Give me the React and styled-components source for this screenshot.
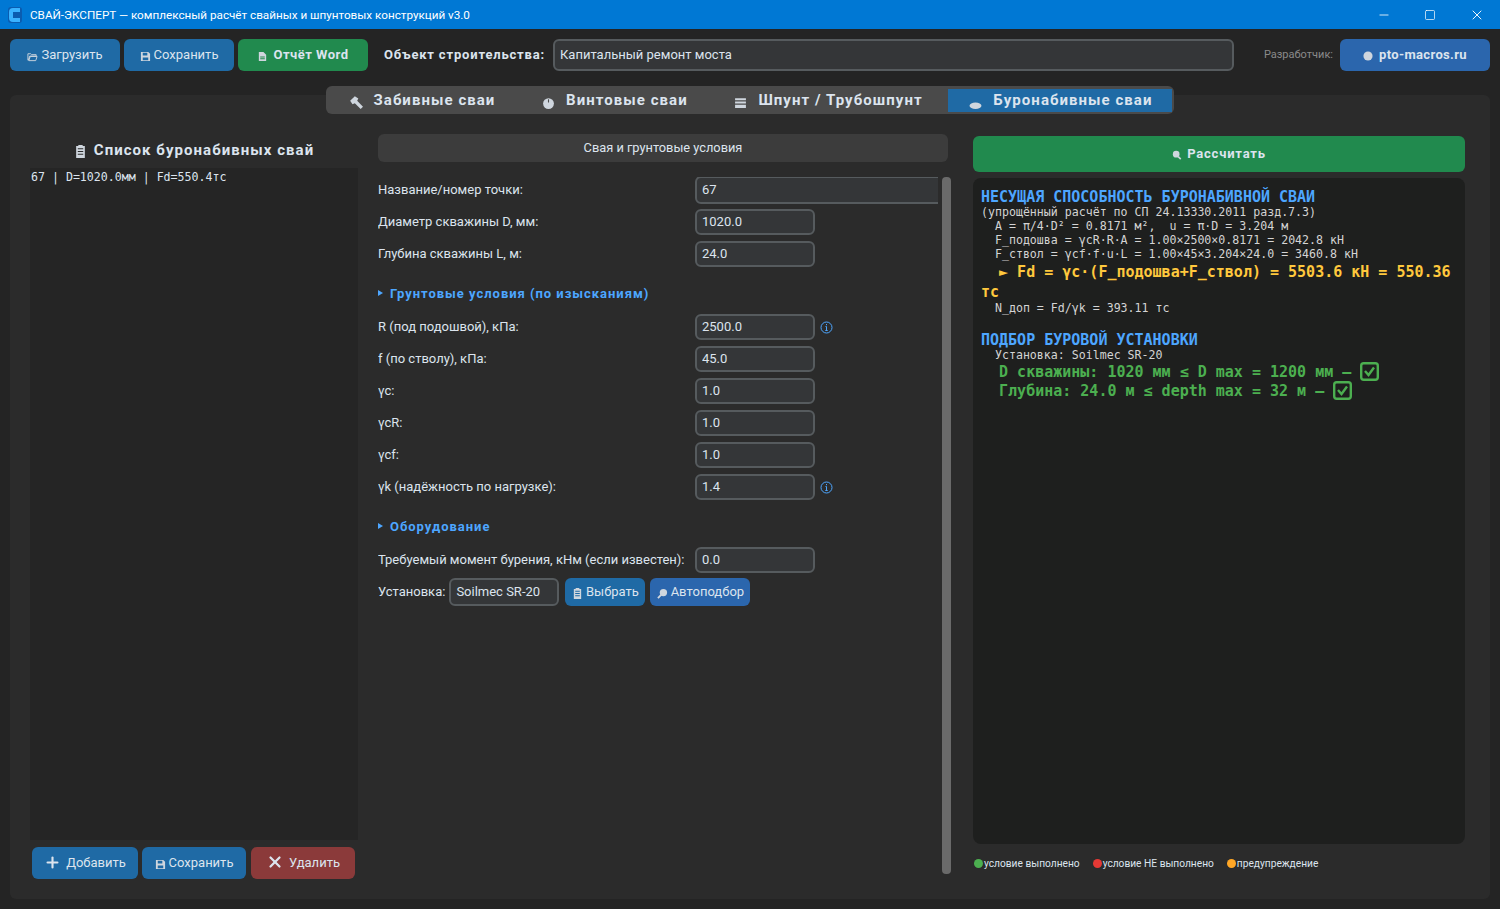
import React from "react";
import styled, { createGlobalStyle } from "styled-components";
import { Minus, Square, X, Plus } from "lucide-react";

const GlobalStyle = createGlobalStyle`
  html, body { margin: 0; padding: 0; background: #242424; }
  body { font-family: Roboto, "Liberation Sans", sans-serif; color: #dce4ee; }
  * { box-sizing: border-box; }
`;

const Window = styled.div`
  width: 1500px;
  height: 909px;
  overflow: hidden;
  display: flex;
  flex-direction: column;
  background: #242424;
`;

const TitleBar = styled.div`
  height: 29px;
  background: #0078d4;
  display: flex;
  align-items: center;
  padding-left: 8px;
  color: #fff;
  font-size: 11.7px;
`;

const TitleText = styled.span`
  margin-left: 8px;
  flex: 1;
`;

const WinControls = styled.div`
  display: flex;
  align-items: center;
  gap: 33px;
  padding-right: 15px;
  color: #fff;
`;

const Toolbar = styled.div`
  display: flex;
  align-items: center;
  height: 32px;
  margin: 10px 10px 0;
`;

const Button = styled.div`
  display: flex;
  align-items: center;
  justify-content: center;
  gap: ${(p) => p.$gap || 3}px;
  flex: none;
  width: ${(p) => p.$w}px;
  height: ${(p) => p.$h || 32}px;
  margin-left: ${(p) => p.$ml || 0}px;
  padding-bottom: 2px;
  border-radius: 6px;
  background: ${(p) => p.$bg || "#1f6aa5"};
  color: #dce4ee;
  font-size: 13px;
  font-weight: ${(p) => (p.$bold ? 700 : 400)};
  letter-spacing: ${(p) => (p.$bold ? `${p.$ls ?? 0.5}px` : "0")};
`;

const ObjectLabel = styled.span`
  margin-left: 16px;
  padding-bottom: 2px;
  font-size: 13px;
  font-weight: 700;
  letter-spacing: 0.82px;
  white-space: nowrap;
`;

const Input = styled.input`
  display: block;
  flex: ${(p) => (p.$grow ? 1 : "none")};
  width: ${(p) => (p.$w ? `${p.$w}px` : "120px")};
  height: ${(p) => p.$h || 26}px;
  margin-left: ${(p) => p.$ml || 0}px;
  padding: 0 5px 2px;
  border: 2px solid #565b5e;
  border-radius: 6px;
  background: #343638;
  color: #dce4ee;
  font: 13px Roboto, "Liberation Sans", sans-serif;
  outline: none;
`;

const DevLabel = styled.span`
  margin: 0 7px 0 30px;
  padding-bottom: 2px;
  color: #8a8a8a;
  font-size: 11px;
`;

const Stage = styled.div`
  flex: 1;
  display: flex;
  flex-direction: column;
  align-items: center;
  margin: 15px 10px 10px;
`;

const TabBar = styled.div`
  position: relative;
  z-index: 1;
  display: flex;
  align-items: center;
  height: 28px;
  margin-bottom: -19px;
  padding: 3px 2px;
  border-radius: 6px;
  background: #4a4a4a;
`;

const Tab = styled.div`
  display: flex;
  align-items: center;
  gap: 11px;
  height: 23px;
  padding: ${(p) => (p.$active ? "0 20px 0 21px" : "0 25.7px 0 21px")};
  background: ${(p) => (p.$active ? "#1f6aa5" : "transparent")};
  color: #dce4ee;
  font-size: 15px;
  font-weight: 700;
  letter-spacing: 1.05px;
  white-space: nowrap;
`;

const Panel = styled.div`
  flex: 1;
  width: 100%;
  display: grid;
  grid-template-columns: 328px 570px 497px;
  column-gap: 20px;
  padding: 39px 0 20px 20px;
  border-radius: 6px;
  background: #2b2b2b;
`;

const LeftCol = styled.div`
  display: flex;
  flex-direction: column;
`;

const ListTitle = styled.div`
  display: flex;
  align-items: center;
  justify-content: center;
  gap: 7px;
  height: 34px;
  padding-bottom: 3px;
  font-size: 15px;
  font-weight: 700;
  letter-spacing: 1.05px;
`;

const PileList = styled.div`
  height: 672px;
  padding: 2px 1px;
  background: #252525;
  font-family: "DejaVu Sans Mono", monospace;
  font-size: 11.6px;
  line-height: 14px;
  white-space: pre;
`;

const ListActions = styled.div`
  display: flex;
  margin: 7px 0 0 2px;
`;

const CenterCol = styled.div`
  position: relative;
`;

const SectionHead = styled.div`
  display: flex;
  align-items: center;
  justify-content: center;
  height: 28px;
  padding-bottom: 2px;
  border-radius: 6px;
  background: #3c3c3c;
  font-size: 12.8px;
`;

const Form = styled.div`
  width: 560px;
  height: 697px;
  margin-top: 15px;
  overflow: hidden;
  display: flex;
  flex-direction: column;
`;

const Row = styled.div`
  display: flex;
  align-items: center;
  flex: none;
  height: 26px;
  margin-bottom: 6px;
`;

const Label = styled.label`
  flex: none;
  width: 317px;
  padding-bottom: 1px;
  font-size: 13px;
  white-space: nowrap;
`;

const InlineLabel = styled.span`
  padding-bottom: 1px;
  font-size: 13px;
  margin-right: 4px;
`;

const Group = styled.div`
  flex: none;
  height: 20px;
  margin: ${(p) => p.$top}px 0 ${(p) => p.$bottom}px;
  display: flex;
  align-items: center;
  gap: 6px;
  color: #4da6ff;
  font-size: 13px;
  font-weight: 700;
  letter-spacing: 0.97px;
`;

const GroupMark = styled.span`
  width: 0;
  height: 0;
  margin-right: 1px;
  border-left: 5px solid #4da6ff;
  border-top: 3px solid transparent;
  border-bottom: 3px solid transparent;
`;

const Info = styled.svg`
  flex: none;
  margin-left: 5px;
`;

const ScrollThumb = styled.div`
  position: absolute;
  top: 43px;
  right: -3px;
  width: 9px;
  height: 697px;
  border-radius: 4px;
  background: #6a6a6a;
`;

const RightCol = styled.div`
  display: flex;
  flex-direction: column;
  padding-top: 2px;
  margin-left: 5px;
`;

const CalcButton = styled(Button)`
  width: 492px;
  height: 36px;
  letter-spacing: 0.8px;
`;

const Result = styled.div`
  height: 666px;
  margin-top: 6px;
  padding: 11px 8px;
  border-radius: 8px;
  background: #1e1f1e;
  font-family: "DejaVu Sans Mono", monospace;
  white-space: pre-wrap;
`;

const Plain = styled.div`
  color: #d4d4d4;
  font-size: 11.6px;
  line-height: 14px;
`;

const Heading = styled.div`
  color: #4da6ff;
  font-size: 15px;
  font-weight: 700;
  line-height: 16px;
  margin-top: ${(p) => p.$top || 0}px;
`;

const Highlight = styled.div`
  color: #ffc83d;
  font-size: 15px;
  font-weight: 700;
  line-height: 20px;
  margin: 1px 0 -1px;
`;

const Ok = styled.div`
  display: flex;
  align-items: center;
  height: 19px;
  color: #4caf50;
  font-size: 15px;
  font-weight: 700;
`;

const Check = styled.svg`
  flex: none;
  margin-left: 9px;
`;

const Legend = styled.div`
  display: flex;
  align-items: center;
  gap: 12px;
  margin-top: 14px;
  font-size: 10.2px;
`;

const LegendItem = styled.span`
  display: flex;
  align-items: center;
`;

const Dot = styled.span`
  width: 9px;
  height: 9px;
  margin: 0 1px 0 1px;
  border-radius: 50%;
  background: ${(p) => p.$c};
`;

const Glyph = ({ size = 11, children, color = "#cfd6de" }) => (
  <svg width={size} height={size} viewBox="0 0 12 12" fill={color} style={{ flex: "none", marginTop: 4 }}>
    {children}
  </svg>
);

const Folder = () => (
  <Glyph>
    <path d="M1 3h3l1 1h5v1.500H3L1.500 10H1zM3.500 6H11l-1.500 4.500H2z" fill="none" stroke="#cfd6de" />
  </Glyph>
);
const Floppy = () => (
  <Glyph>
    <path d="M1 1h8l2 2v8H1zM3 2v3h5V2zM3 7v3h6V7z" fillRule="evenodd" />
  </Glyph>
);
const Doc = () => (
  <Glyph>
    <path d="M2 1h5l3 3v7H2zM3.500 6v1h5V6zM3.500 8v1h5V8z" fillRule="evenodd" />
  </Glyph>
);
const Clipboard = ({ size = 11 }) => (
  <Glyph size={size}>
    <path d="M4 0h4v1h2v11H2V1h2zM3.500 3v1h5V3zM3.500 5.500v1h5v-1zM3.500 8v1h5V8z" fillRule="evenodd" />
  </Glyph>
);
const Hammer = () => (
  <Glyph size={14}>
    <path d="M1 5l4-4 3 2-1 2 5 5-2 2-5-5-2 1z" />
  </Glyph>
);
const Ball = () => (
  <Glyph size={13}>
    <circle cx="6" cy="7" r="5" />
    <path d="M6 3v3" stroke="#4a4a4a" />
  </Glyph>
);
const Lines = () => (
  <Glyph size={13}>
    <path d="M1 2h10v2H1zM1 5h10v2H1zM1 8h10v3H1z" />
  </Glyph>
);
const Hole = () => (
  <Glyph size={13}>
    <ellipse cx="6" cy="9" rx="5.500" ry="3" />
  </Glyph>
);
const Lens = () => (
  <Glyph size={10}>
    <circle cx="5" cy="5" r="4" />
    <path d="M7.500 8l3 3" stroke="#cfd6de" strokeWidth="2" />
  </Glyph>
);
const Probe = () => (
  <Glyph size={11}>
    <circle cx="7" cy="5" r="4" />
    <path d="M1 11l4-4" stroke="#cfd6de" strokeWidth="2" />
  </Glyph>
);
const Globe = () => (
  <Glyph size={10}>
    <circle cx="6" cy="6" r="5.500" />
  </Glyph>
);

const InfoIcon = () => (
  <Info width="13" height="13" viewBox="0 0 13 13" fill="none" stroke="#4da6ff">
    <circle cx="6.500" cy="6.500" r="5.500" />
    <path d="M6.500 5.500v4M5.300 9.500h2.400M5.500 5.500h1M6.500 3v1.200" />
  </Info>
);

const CheckBox = () => (
  <Check width="19" height="19" viewBox="0 0 19 19" fill="none" stroke="#4caf50" strokeWidth="2.4">
    <rect x="1.200" y="1.200" width="16.600" height="16.600" rx="2.500" />
    <path d="M5 9l3.500 4L14 5.500" />
  </Check>
);

const fields1 = [
  ["Диаметр скважины D, мм:", "1020.0"],
  ["Глубина скважины L, м:", "24.0"],
];

const fields2 = [
  ["R (под подошвой), кПа:", "2500.0", true],
  ["f (по стволу), кПа:", "45.0"],
  ["γс:", "1.0"],
  ["γсR:", "1.0"],
  ["γсf:", "1.0"],
  ["γk (надёжность по нагрузке):", "1.4", true],
];

function Field({ label, value, info }) {
  return (
    <Row>
      <Label>{label}</Label>
      <Input readOnly defaultValue={value} />
      {info && <InfoIcon />}
    </Row>
  );
}

export default function App() {
  return (
    <>
      <GlobalStyle />
      <Window>
        <TitleBar>
          <svg width="14" height="16" viewBox="0 0 14 16">
            <rect width="14" height="16" rx="3" fill="#0a5cb0" />
            <path d="M12 3H5Q3 3 3 5v6q0 2 2 2h7" fill="none" stroke="#39b2ff" strokeWidth="4" />
          </svg>
          <TitleText>СВАЙ-ЭКСПЕРТ — комплексный расчёт свайных и шпунтовых конструкций v3.0</TitleText>
          <WinControls>
            <Minus size={14} strokeWidth={1.4} />
            <Square size={12} strokeWidth={1.4} />
            <X size={16} strokeWidth={1.4} />
          </WinControls>
        </TitleBar>

        <Toolbar>
          <Button $w={110}><Folder />Загрузить</Button>
          <Button $w={110} $ml={4}><Floppy />Сохранить</Button>
          <Button $w={130} $ml={4} $bg="#218a4e" $bold $gap={5}><Doc />Отчёт Word</Button>
          <ObjectLabel>Объект строительства:</ObjectLabel>
          <Input $grow $h={32} $ml={8} readOnly defaultValue="Капитальный ремонт моста" />
          <DevLabel>Разработчик:</DevLabel>
          <Button $w={150} $bg="#2b66ad" $bold $gap={6} $ls={0.35}><Globe />pto-macros.ru</Button>
        </Toolbar>

        <Stage>
          <TabBar>
            <Tab><Hammer />Забивные сваи</Tab>
            <Tab><Ball />Винтовые сваи</Tab>
            <Tab><Lines />Шпунт / Трубошпунт</Tab>
            <Tab $active><Hole />Буронабивные сваи</Tab>
          </TabBar>

          <Panel>
            <LeftCol>
              <ListTitle><Clipboard size={13} />Список буронабивных свай</ListTitle>
              <PileList>67 | D=1020.0мм | Fd=550.4тс</PileList>
              <ListActions>
                <Button $w={106} $gap={5}><Plus size={17} strokeWidth={3} />Добавить</Button>
                <Button $w={104} $ml={4}><Floppy />Сохранить</Button>
                <Button $w={104} $ml={5} $bg="#8b3a3a" $gap={5}><X size={18} strokeWidth={3} />Удалить</Button>
              </ListActions>
            </LeftCol>

            <CenterCol>
              <SectionHead>Свая и грунтовые условия</SectionHead>
              <Form>
                <Row>
                  <Label>Название/номер точки:</Label>
                  <Input $w={260} $h={28} readOnly defaultValue="67" />
                </Row>
                {fields1.map(([label, value]) => (
                  <Field key={label} label={label} value={value} />
                ))}
                <Group $top={10} $bottom={11}><GroupMark />Грунтовые условия (по изысканиям)</Group>
                {fields2.map(([label, value, info]) => (
                  <Field key={label} label={label} value={value} info={info} />
                ))}
                <Group $top={10} $bottom={11}><GroupMark />Оборудование</Group>
                <Field label="Требуемый момент бурения, кНм (если известен):" value="0.0" />
                <Row>
                  <InlineLabel>Установка:</InlineLabel>
                  <Input $w={110} $h={28} readOnly defaultValue="Soilmec SR-20" />
                  <Button $w={80} $h={28} $ml={6}><Clipboard />Выбрать</Button>
                  <Button $w={100} $h={28} $ml={5} $bg="#2b66ad"><Probe />Автоподбор</Button>
                </Row>
              </Form>
              <ScrollThumb />
            </CenterCol>

            <RightCol>
              <CalcButton $bg="#218a4e" $bold $gap={5}><Lens />Рассчитать</CalcButton>
              <Result>
                <Heading>НЕСУЩАЯ СПОСОБНОСТЬ БУРОНАБИВНОЙ СВАИ</Heading>
                <Plain>(упрощённый расчёт по СП 24.13330.2011 разд.7.3)</Plain>
                <Plain>{"  A = π/4·D² = 0.8171 м²,  u = π·D = 3.204 м"}</Plain>
                <Plain>{"  F_подошва = γсR·R·A = 1.00×2500×0.8171 = 2042.8 кН"}</Plain>
                <Plain>{"  F_ствол = γсf·f·u·L = 1.00×45×3.204×24.0 = 3460.8 кН"}</Plain>
                <Highlight>{"  ► Fd = γс·(F_подошва+F_ствол) = 5503.6 кН = 550.36 тс"}</Highlight>
                <Plain>{"  N_доп = Fd/γk = 393.11 тс"}</Plain>
                <Heading $top={17}>ПОДБОР БУРОВОЙ УСТАНОВКИ</Heading>
                <Plain>{"  Установка: Soilmec SR-20"}</Plain>
                <Ok>{"  D скважины: 1020 мм ≤ D max = 1200 мм —"}<CheckBox /></Ok>
                <Ok>{"  Глубина: 24.0 м ≤ depth max = 32 м —"}<CheckBox /></Ok>
              </Result>
              <Legend>
                <LegendItem><Dot $c="#4caf50" />условие выполнено</LegendItem>
                <LegendItem><Dot $c="#e53935" />условие НЕ выполнено</LegendItem>
                <LegendItem><Dot $c="#ffa726" />предупреждение</LegendItem>
              </Legend>
            </RightCol>
          </Panel>
        </Stage>
      </Window>
    </>
  );
}
